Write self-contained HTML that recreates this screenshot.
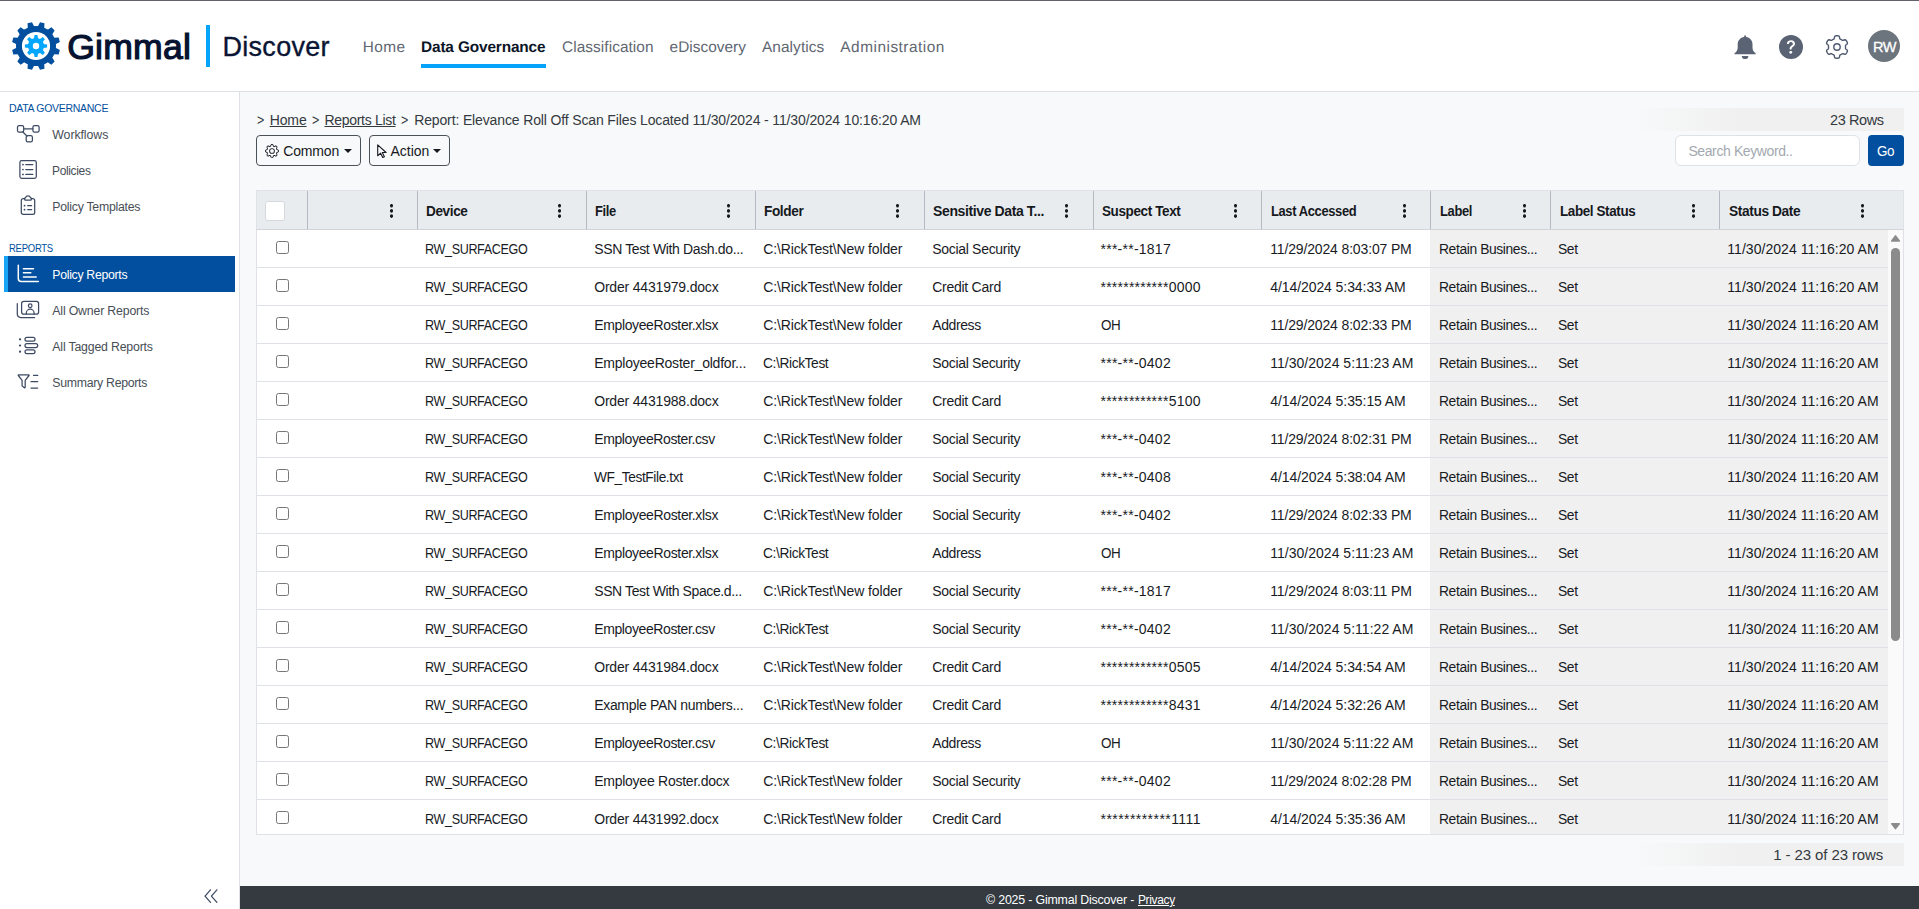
<!DOCTYPE html>
<html lang="en">
<head>
<meta charset="utf-8">
<title>Gimmal Discover - Policy Reports</title>
<style>
*{box-sizing:border-box;}
html,body{margin:0;padding:0;}
body{width:1919px;height:909px;overflow:hidden;position:relative;background:#f8f9fa;font-family:"Liberation Sans",sans-serif;color:#212529;font-size:14px;}
a{color:inherit;text-decoration:underline;}
svg{position:absolute;overflow:visible;}
.abs{position:absolute;}
.t{position:absolute;white-space:pre;line-height:1;transform-origin:0 50%;}
a.nav,a.si{text-decoration:none;}
#topline{left:0;top:0;width:1919px;height:1px;background:#665f6d;}
#header{left:0;top:1px;width:1919px;height:91px;background:#fff;border-bottom:1px solid #dee2e6;}
#logo-bar{left:206px;top:25px;width:4px;height:42px;background:#04a4fb;}
.nav{color:#5f6772;}
.nav.on{color:#0b1526;font-weight:bold;}
#nav-ul{left:421px;top:64px;width:125px;height:4px;background:#05a3fb;}
#avatar{left:1868px;top:30px;width:32px;height:32px;border-radius:50%;background:#6c757d;}
#sidebar{left:0;top:92px;width:240px;height:817px;background:#fff;border-right:1px solid #dee2e6;}
.sh{color:#014f9e;}
.si{color:#474e56;}
.si.on{color:#fff;}
#active{left:4px;top:256px;width:231px;height:36px;background:#014f9e;border-left:4px solid #18a4f5;}
.ic{fill:none;stroke:#3d4a63;stroke-width:1.25;stroke-linecap:round;stroke-linejoin:round;}
.ic.w{stroke:#fff;}
#crumb{color:#343a40;}
.btn{position:absolute;top:135px;height:31px;border:1px solid #4a5157;border-radius:4px;background:#f8f9fa;}
.caret{position:absolute;width:0;height:0;border-left:4px solid transparent;border-right:4px solid transparent;border-top:4px solid #16191d;}
#rows-top{left:1630px;top:108px;width:274px;height:23px;background:linear-gradient(90deg,rgba(240,240,240,0),#f0f0f0 40%);}
#search{left:1675px;top:135px;width:185px;height:31px;border:1px solid #dee2e6;border-radius:6px;background:#fff;}
#go{left:1868px;top:135px;width:36px;height:31px;border-radius:4px;background:#014f9e;}
#grid{left:256px;top:190px;width:1648px;height:645px;background:#fff;border:1px solid #dee2e6;}
#ghead{left:256px;top:190px;width:1648px;height:40px;background:#e9ecef;border:1px solid #dee2e6;border-bottom:1px solid #ced4da;}
.sep{position:absolute;top:191px;width:1px;height:38px;background:#b4bac1;}
.hb{font-weight:bold;color:#16191d;}
.kb{position:absolute;top:203.8px;width:3.4px;height:14px;background:radial-gradient(circle at 1.7px 1.7px,#16191d 1.5px,rgba(22,25,29,0) 1.9px) 0 0/3.4px 5.2px repeat-y;}
#hcheck{left:265px;top:201px;width:20px;height:20px;border:1px solid #d5d9de;border-radius:3px;background:#fff;}
#shade{left:1430px;top:230px;width:458px;height:604px;background:#f0f0f0;}
.rl{position:absolute;left:257px;width:1631px;height:1px;background:#dee2e6;}
.cb{position:absolute;left:276px;width:13px;height:13px;border:1px solid #767676;border-radius:2.5px;background:#fff;}
.c{color:#181b1f;}
#vthumb{left:1891px;top:247.700px;width:9px;height:393.300px;border-radius:4.500px;background:#8b8b8b;}
.arr{position:absolute;left:1891px;width:0;height:0;border-left:4.8px solid transparent;border-right:4.8px solid transparent;}
#pager{left:1630px;top:843px;width:274px;height:23px;background:linear-gradient(90deg,rgba(240,240,240,0),#f0f0f0 40%);}
#footer{left:240px;top:886px;width:1679px;height:23px;background:#343a40;}
</style>
</head>
<body>
<div id="topline" class="abs"></div>
<header>
<div id="header" class="abs"></div>
<svg class="abs" style="left:0;top:0" width="72" height="92" viewBox="0 0 72 92"><path d="M37.81 26.48 L40.01 22.14 L44.46 23.33 L44.19 28.19 L47.33 30.01 L51.41 27.34 L54.66 30.59 L51.99 34.67 L53.81 37.81 L58.67 37.54 L59.86 41.99 L55.52 44.19 L55.52 47.81 L59.86 50.01 L58.67 54.46 L53.81 54.19 L51.99 57.33 L54.66 61.41 L51.41 64.66 L47.33 61.99 L44.19 63.81 L44.46 68.67 L40.01 69.86 L37.81 65.52 L34.19 65.52 L31.99 69.86 L27.54 68.67 L27.81 63.81 L24.67 61.99 L20.59 64.66 L17.34 61.41 L20.01 57.33 L18.19 54.19 L13.33 54.46 L12.14 50.01 L16.48 47.81 L16.48 44.19 L12.14 41.99 L13.33 37.54 L18.19 37.81 L20.01 34.67 L17.34 30.59 L20.59 27.34 L24.67 30.01 L27.81 28.19 L27.54 23.33 L31.99 22.14 L34.19 26.48Z" fill="#014f9e"/><circle cx="36" cy="46" r="20" fill="#014f9e"/><circle cx="36" cy="46" r="14.1" fill="#fff"/><path d="M33.90 38.70 L34.55 34.89 L37.45 34.89 L38.10 38.70 L39.68 39.35 L42.83 37.12 L44.88 39.17 L42.65 42.32 L43.30 43.90 L47.11 44.55 L47.11 47.45 L43.30 48.10 L42.65 49.68 L44.88 52.83 L42.83 54.88 L39.68 52.65 L38.10 53.30 L37.45 57.11 L34.55 57.11 L33.90 53.30 L32.32 52.65 L29.17 54.88 L27.12 52.83 L29.35 49.68 L28.70 48.10 L24.89 47.45 L24.89 44.55 L28.70 43.90 L29.35 42.32 L27.12 39.17 L29.17 37.12 L32.32 39.35Z" fill="#05a6fd"/><circle cx="36" cy="46" r="8" fill="#05a6fd"/><circle cx="36" cy="46" r="3.2" fill="#fff"/></svg>
<span class="t" style="left:67.2px;top:29.5px;font-size:35.6px;letter-spacing:0.211px;color:#051230;-webkit-text-stroke:1.2px #051230;">Gimmal</span>
<div id="logo-bar" class="abs"></div>
<span class="t" style="left:222.4px;top:33.8px;font-size:27px;letter-spacing:0.310px;color:#0a1433;-webkit-text-stroke:0.35px #0a1433;">Discover</span>
<a class="t nav" style="left:362.7px;top:40.2px;font-size:15.4px;letter-spacing:0.413px;text-rendering:geometricPrecision;">Home</a>
<a class="t nav on bold" style="left:421.0px;top:40.2px;font-size:15.4px;letter-spacing:-0.144px;text-rendering:geometricPrecision;">Data Governance</a>
<a class="t nav" style="left:562.1px;top:40.2px;font-size:15.4px;letter-spacing:0.056px;text-rendering:geometricPrecision;">Classification</a>
<a class="t nav" style="left:669.6px;top:40.2px;font-size:15.4px;letter-spacing:0.019px;text-rendering:geometricPrecision;">eDiscovery</a>
<a class="t nav" style="left:761.9px;top:40.2px;font-size:15.4px;letter-spacing:0.101px;text-rendering:geometricPrecision;">Analytics</a>
<a class="t nav" style="left:840.3px;top:40.2px;font-size:15.4px;letter-spacing:0.506px;text-rendering:geometricPrecision;">Administration</a>
<div id="nav-ul" class="abs"></div>
<svg style="left:0;top:0" width="1919" height="92" viewBox="0 0 1919 92" fill="#5a6374"><path d="M1744.1 37C1744.1 34.600 1746.100 34.600 1746.100 37C1749.900 37.600 1752.500 40.400 1752.500 44.200L1752.500 47.500C1752.500 50.400 1753.900 52 1755.700 53.200L1755.700 54.200L1734.500 54.200L1734.500 53.200C1736.300 52 1737.700 50.400 1737.700 47.500L1737.700 44.200C1737.700 40.400 1740.300 37.600 1744.100 37Z"/><path d="M1741.800 56H1748.400A3.300 3.100 0 0 1 1741.800 56Z"/></svg>
<svg style="left:1779px;top:34.8px" width="24" height="24" viewBox="0 0 16 16" fill="#5a6374"><path d="M16 8A8 8 0 1 1 0 8a8 8 0 0 1 16 0M5.496 6.033h.825c.138 0 .248-.113.266-.25.09-.656.54-1.134 1.342-1.134.686 0 1.314.343 1.314 1.168 0 .635-.374.927-.965 1.371-.673.489-1.206 1.06-1.168 1.987l.003.217a.25.25 0 0 0 .25.246h.811a.25.25 0 0 0 .25-.25v-.105c0-.718.273-.927 1.01-1.486.609-.463 1.244-.977 1.244-2.056 0-1.511-1.276-2.241-2.673-2.241-1.267 0-2.655.59-2.75 2.286a.237.237 0 0 0 .241.247m2.325 6.443c.61 0 1.029-.394 1.029-.927 0-.552-.42-.94-1.029-.94-.584 0-1.009.388-1.009.94 0 .533.425.927 1.01.927z"/></svg>
<svg style="left:0;top:0" width="1919" height="92" viewBox="0 0 1919 92" fill="none" stroke="#4f5a70" stroke-width="1.4" stroke-linejoin="round"><path d="M1837.00 35.75 L1837.49 35.76 L1837.98 35.80 L1838.46 35.88 L1838.93 36.04 L1839.33 36.48 L1839.56 37.46 L1839.70 38.44 L1839.95 38.90 L1840.27 39.12 L1840.60 39.29 L1840.93 39.46 L1841.25 39.64 L1841.57 39.83 L1841.88 40.03 L1842.19 40.23 L1842.54 40.39 L1843.06 40.38 L1843.98 40.02 L1844.94 39.72 L1845.52 39.85 L1845.90 40.17 L1846.21 40.55 L1846.49 40.96 L1846.74 41.38 L1846.98 41.81 L1847.19 42.25 L1847.36 42.71 L1847.45 43.19 L1847.28 43.76 L1846.54 44.44 L1845.76 45.06 L1845.49 45.50 L1845.46 45.89 L1845.48 46.26 L1845.49 46.63 L1845.50 47.00 L1845.49 47.37 L1845.48 47.74 L1845.46 48.11 L1845.49 48.50 L1845.76 48.94 L1846.54 49.56 L1847.28 50.24 L1847.45 50.81 L1847.36 51.29 L1847.19 51.75 L1846.98 52.19 L1846.74 52.62 L1846.49 53.04 L1846.21 53.45 L1845.90 53.83 L1845.52 54.15 L1844.94 54.28 L1843.98 53.98 L1843.06 53.62 L1842.54 53.61 L1842.19 53.77 L1841.88 53.97 L1841.57 54.17 L1841.25 54.36 L1840.93 54.54 L1840.60 54.71 L1840.27 54.88 L1839.95 55.10 L1839.70 55.56 L1839.56 56.54 L1839.33 57.52 L1838.93 57.96 L1838.46 58.12 L1837.98 58.20 L1837.49 58.24 L1837.00 58.25 L1836.51 58.24 L1836.02 58.20 L1835.54 58.12 L1835.07 57.96 L1834.67 57.52 L1834.44 56.54 L1834.30 55.56 L1834.05 55.10 L1833.73 54.88 L1833.40 54.71 L1833.07 54.54 L1832.75 54.36 L1832.43 54.17 L1832.12 53.97 L1831.81 53.77 L1831.46 53.61 L1830.94 53.62 L1830.02 53.98 L1829.06 54.28 L1828.48 54.15 L1828.10 53.83 L1827.79 53.45 L1827.51 53.04 L1827.26 52.63 L1827.02 52.19 L1826.81 51.75 L1826.64 51.29 L1826.55 50.81 L1826.72 50.24 L1827.46 49.56 L1828.24 48.94 L1828.51 48.50 L1828.54 48.11 L1828.52 47.74 L1828.51 47.37 L1828.50 47.00 L1828.51 46.63 L1828.52 46.26 L1828.54 45.89 L1828.51 45.50 L1828.24 45.06 L1827.46 44.44 L1826.72 43.76 L1826.55 43.19 L1826.64 42.71 L1826.81 42.25 L1827.02 41.81 L1827.26 41.38 L1827.51 40.96 L1827.79 40.55 L1828.10 40.17 L1828.48 39.85 L1829.06 39.72 L1830.02 40.02 L1830.94 40.38 L1831.46 40.39 L1831.81 40.23 L1832.12 40.03 L1832.43 39.83 L1832.75 39.64 L1833.07 39.46 L1833.40 39.29 L1833.73 39.12 L1834.05 38.90 L1834.30 38.44 L1834.44 37.46 L1834.67 36.48 L1835.07 36.04 L1835.54 35.88 L1836.02 35.80 L1836.51 35.76Z"/><circle cx="1837" cy="47" r="3.2"/></svg>
<div id="avatar" class="abs"></div>
<span class="t" style="left:1872.8px;top:39.1px;font-size:15.2px;letter-spacing:-0.426px;transform:scaleX(0.9591);color:#fff;-webkit-text-stroke:0.3px #fff;">RW</span>
</header>
<nav>
<div id="sidebar" class="abs"></div>
<span class="t sh" style="left:8.6px;top:102.7px;font-size:11.2px;letter-spacing:-0.314px;transform:scaleX(0.9391);">DATA GOVERNANCE</span>
<span class="t sh" style="left:8.6px;top:242.5px;font-size:11.2px;letter-spacing:-0.314px;transform:scaleX(0.8499);">REPORTS</span>
<div id="active" class="abs"></div>
<a class="t si" style="left:52.3px;top:129.0px;font-size:12.3px;letter-spacing:-0.061px;">Workflows</a>
<a class="t si" style="left:52.3px;top:165.0px;font-size:12.3px;letter-spacing:-0.344px;transform:scaleX(0.9734);">Policies</a>
<a class="t si" style="left:52.3px;top:201.0px;font-size:12.3px;letter-spacing:-0.263px;">Policy Templates</a>
<a class="t si on" style="left:52.3px;top:269.0px;font-size:12.3px;letter-spacing:-0.306px;">Policy Reports</a>
<a class="t si" style="left:52.3px;top:305.0px;font-size:12.3px;letter-spacing:-0.168px;">All Owner Reports</a>
<a class="t si" style="left:52.3px;top:341.0px;font-size:12.3px;letter-spacing:-0.176px;">All Tagged Reports</a>
<a class="t si" style="left:52.3px;top:377.0px;font-size:12.3px;letter-spacing:-0.285px;">Summary Reports</a>
<svg class="ic" style="left:0;top:0" width="240" height="909" viewBox="0 0 240 909">
<rect x="17.5" y="125.6" width="6.2" height="6.4" rx="1.6"/><rect x="32.9" y="125.6" width="6.2" height="6.4" rx="1.6"/><rect x="26.2" y="135.6" width="6.2" height="6.2" rx="1.6"/><path d="M23.7 128.8H32.9M22.6 131.8L27 136"/>
<rect x="19.9" y="160.7" width="16.4" height="17.6" rx="1.8"/><path d="M25.8 164.6H32.8M25.8 169.5H32.8M25.8 174.4H32.8"/><path d="M22.9 164.6h.1M22.9 169.5h.1M22.9 174.4h.1" stroke-width="1.7"/>
<path d="M24.6 198.6H23.2a1.9 1.9 0 0 0-1.9 1.9V212.4a1.9 1.9 0 0 0 1.9 1.9H32.8a1.9 1.9 0 0 0 1.9-1.9V200.5a1.9 1.9 0 0 0-1.9-1.9H31.4"/><path d="M24.6 198.9a1.2 1.2 0 0 1 1-1.2c.5-2.6 4.3-2.6 4.800 0a1.200 1.200 0 0 1 1 1.200v.3a1 1 0 0 1-1 1H25.600a1 1 0 0 1-1-1z"/><path d="M27.700 205.700H31.600M27.700 209.700H31.600"/><path d="M24.500 205.700h.1M24.500 209.700h.1" stroke-width="1.700"/>
</svg>
<svg class="ic w" stroke-width="1.5" style="left:0;top:0;stroke-width:1.5" width="240" height="909" viewBox="0 0 240 909">
<path d="M18.3 265.300V278.600a3 3 0 0 0 3 3H38.300"/><path d="M23.400 268.700H33.500M23.400 272.800H30.800M23.400 276.900H36.200"/>
</svg>
<svg class="ic" style="left:0;top:0" width="240" height="909" viewBox="0 0 240 909">
<rect x="21.600" y="301.400" width="17" height="12.800" rx="2.200"/><circle cx="30.200" cy="305.700" r="1.800"/><path d="M26.300 313.900v-.8a3.900 3.900 0 0 1 7.800 0v.8"/><path d="M17.300 303.700V314.200a3.300 3.300 0 0 0 3.300 3.300H34.600"/>
<rect x="25" y="337.400" width="10" height="3.800" rx="1.900"/><rect x="25" y="343.600" width="12.700" height="3.900" rx="1.950"/><rect x="25" y="349.800" width="10" height="3.800" rx="1.900"/><path d="M20 339.300h.1M20 345.500h.1M20 351.700h.1" stroke-width="2.200"/>
<path d="M18.600 374.800H28.700a.4.4 0 0 1 .3.700L25.200 380.400V387.300a.5.5 0 0 1-.8.400L22.500 386.200a1 1 0 0 1-.4-.8V380.400L18.300 375.500a.4.4 0 0 1 .3-.7z"/><path d="M33.600 375.400H37.700M31 381.700H37.700M31 388H37.700"/>
<path d="M210.500 889.800L205 896.100L210.500 902.400M216.900 889.800L211.400 896.100L216.900 902.400"/>
</svg>
</nav>
<main>
<span class="t" style="left:257.0px;top:112.8px;font-size:14px;letter-spacing:-0.392px;transform:scaleX(0.8916);color:#343a40;">&gt;</span>
<a class="t" style="left:269.7px;top:112.8px;font-size:14px;letter-spacing:-0.120px;color:#343a40;">Home</a>
<span class="t" style="left:312.0px;top:112.8px;font-size:14px;letter-spacing:-0.392px;transform:scaleX(0.8916);color:#343a40;">&gt;</span>
<a class="t" style="left:324.5px;top:112.8px;font-size:14px;letter-spacing:-0.309px;color:#343a40;">Reports List</a>
<span class="t" style="left:401.2px;top:112.8px;font-size:14px;letter-spacing:-0.392px;transform:scaleX(0.8916);color:#343a40;">&gt;</span>
<span class="t" style="left:414.2px;top:112.8px;font-size:14px;letter-spacing:-0.136px;color:#343a40;">Report: Elevance Roll Off Scan Files Located 11/30/2024 - 11/30/2024 10:16:20 AM</span>
<div class="btn" style="left:256px;width:105px"></div><div class="btn" style="left:369px;width:81px"></div>
<svg style="left:265px;top:144px" width="14" height="14" viewBox="0 0 16 16" fill="#16191d"><path d="M8 4.754a3.246 3.246 0 1 0 0 6.492 3.246 3.246 0 0 0 0-6.492M5.754 8a2.246 2.246 0 1 1 4.492 0 2.246 2.246 0 0 1-4.492 0"/><path d="M9.796 1.343c-.527-1.79-3.065-1.79-3.592 0l-.094.319a.873.873 0 0 1-1.255.52l-.292-.16c-1.64-.892-3.433.902-2.54 2.541l.159.292a.873.873 0 0 1-.52 1.255l-.319.094c-1.79.527-1.79 3.065 0 3.592l.319.094a.873.873 0 0 1 .52 1.255l-.16.292c-.892 1.64.901 3.434 2.541 2.54l.292-.159a.873.873 0 0 1 1.255.52l.094.319c.527 1.79 3.065 1.79 3.592 0l.094-.319a.873.873 0 0 1 1.255-.52l.292.16c1.64.893 3.434-.902 2.54-2.541l-.159-.292a.873.873 0 0 1 .52-1.255l.319-.094c1.79-.527 1.79-3.065 0-3.592l-.319-.094a.873.873 0 0 1-.52-1.255l.16-.292c.893-1.64-.902-3.433-2.541-2.54l-.292.159a.873.873 0 0 1-1.255-.52zm-2.633.283c.246-.835 1.428-.835 1.674 0l.094.319a1.873 1.873 0 0 0 2.693 1.115l.291-.16c.764-.415 1.6.42 1.184 1.185l-.159.292a1.873 1.873 0 0 0 1.116 2.692l.318.094c.835.246.835 1.428 0 1.674l-.319.094a1.873 1.873 0 0 0-1.115 2.693l.16.291c.415.764-.42 1.6-1.185 1.184l-.291-.159a1.873 1.873 0 0 0-2.693 1.116l-.094.318c-.246.835-1.428.835-1.674 0l-.094-.319a1.873 1.873 0 0 0-2.692-1.115l-.292.16c-.764.415-1.6-.42-1.184-1.185l.159-.291A1.873 1.873 0 0 0 1.945 8.93l-.319-.094c-.835-.246-.835-1.428 0-1.674l.319-.094A1.873 1.873 0 0 0 3.06 4.377l-.16-.292c-.415-.764.42-1.6 1.185-1.184l.292.159a1.873 1.873 0 0 0 2.692-1.115z"/></svg>
<span class="t" style="left:283.2px;top:143.5px;font-size:14px;letter-spacing:-0.139px;color:#16191d;">Common</span>
<div class="caret" style="left:344px;top:148.500px"></div>
<svg style="left:376px;top:143px" width="12" height="16" viewBox="0 0 12 16" fill="none" stroke="#16191d" stroke-width="1.100" stroke-linejoin="round"><path d="M1.700 1.900V12.800L4.600 10.200L6.700 14.500L8.400 13.700L6.300 9.500H10.100Z"/></svg>
<span class="t" style="left:390.4px;top:143.5px;font-size:14px;letter-spacing:0.016px;color:#16191d;">Action</span>
<div class="caret" style="left:433px;top:148.500px"></div>
<div id="rows-top" class="abs"></div>
<span class="t" style="left:1829.6px;top:112.3px;font-size:15px;letter-spacing:-0.420px;transform:scaleX(0.9671);color:#343a40;">23 Rows</span>
<div id="search" class="abs"></div>
<span class="t" style="left:1688.4px;top:144.4px;font-size:14px;letter-spacing:-0.392px;color:#a3a9b0;">Search Keyword..</span>
<div id="go" class="abs"></div>
<span class="t" style="left:1877.4px;top:143.7px;font-size:14px;letter-spacing:-0.392px;transform:scaleX(0.9620);color:#fff;">Go</span>
<div id="grid" class="abs"></div><div id="shade" class="abs"></div><div id="ghead" class="abs"></div><div id="hcheck" class="abs"></div>
<div class="sep" style="left:307px"></div>
<div class="sep" style="left:417px"></div>
<div class="sep" style="left:586px"></div>
<div class="sep" style="left:755px"></div>
<div class="sep" style="left:924px"></div>
<div class="sep" style="left:1093px"></div>
<div class="sep" style="left:1261px"></div>
<div class="sep" style="left:1430px"></div>
<div class="sep" style="left:1550px"></div>
<div class="sep" style="left:1719px"></div>
<span class="t hb bold" style="left:426.3px;top:204.3px;font-size:14px;letter-spacing:-0.392px;transform:scaleX(0.9700);">Device</span>
<span class="t hb bold" style="left:595.3px;top:204.3px;font-size:14px;letter-spacing:-0.392px;transform:scaleX(0.9238);">File</span>
<span class="t hb bold" style="left:764.3px;top:204.3px;font-size:14px;letter-spacing:-0.392px;transform:scaleX(0.9725);">Folder</span>
<span class="t hb bold" style="left:933.1px;top:204.3px;font-size:14px;letter-spacing:-0.392px;">Sensitive Data T...</span>
<span class="t hb bold" style="left:1101.8px;top:204.3px;font-size:14px;letter-spacing:-0.392px;transform:scaleX(0.9634);">Suspect Text</span>
<span class="t hb bold" style="left:1271.2px;top:204.3px;font-size:14px;letter-spacing:-0.392px;transform:scaleX(0.9220);">Last Accessed</span>
<span class="t hb bold" style="left:1440.1px;top:204.3px;font-size:14px;letter-spacing:-0.392px;transform:scaleX(0.9254);">Label</span>
<span class="t hb bold" style="left:1559.6px;top:204.3px;font-size:14px;letter-spacing:-0.392px;transform:scaleX(0.9590);">Label Status</span>
<span class="t hb bold" style="left:1728.8px;top:204.3px;font-size:14px;letter-spacing:-0.392px;transform:scaleX(0.9807);">Status Date</span>
<div class="kb" style="left:390.0px"></div>
<div class="kb" style="left:557.6px"></div>
<div class="kb" style="left:726.6px"></div>
<div class="kb" style="left:895.6px"></div>
<div class="kb" style="left:1064.6px"></div>
<div class="kb" style="left:1233.6px"></div>
<div class="kb" style="left:1402.6px"></div>
<div class="kb" style="left:1523.0px"></div>
<div class="kb" style="left:1691.6px"></div>
<div class="kb" style="left:1860.7px"></div>
<div class="rl" style="top:267px"></div>
<div class="cb" style="top:241px"></div>
<span class="t c" style="left:425.4px;top:242.1px;font-size:14px;letter-spacing:-0.392px;transform:scaleX(0.8973);">RW_SURFACEGO</span>
<span class="t c" style="left:594.2px;top:242.1px;font-size:14px;letter-spacing:-0.361px;">SSN Test With Dash.do...</span>
<span class="t c" style="left:763.2px;top:242.1px;font-size:14px;letter-spacing:-0.114px;">C:\RickTest\New folder</span>
<span class="t c" style="left:932.2px;top:242.1px;font-size:14px;letter-spacing:-0.300px;">Social Security</span>
<span class="t c" style="left:1100.5px;top:242.1px;font-size:14px;letter-spacing:0.248px;">***-**-1817</span>
<span class="t c" style="left:1270.2px;top:242.1px;font-size:14px;letter-spacing:-0.147px;">11/29/2024 8:03:07 PM</span>
<span class="t c" style="left:1439.2px;top:242.1px;font-size:14px;letter-spacing:-0.392px;transform:scaleX(0.9892);">Retain Busines...</span>
<span class="t c" style="left:1558.2px;top:242.1px;font-size:14px;letter-spacing:-0.392px;transform:scaleX(0.9886);">Set</span>
<span class="t c" style="left:1727.3px;top:242.1px;font-size:14px;letter-spacing:0.038px;">11/30/2024 11:16:20 AM</span>
<div class="rl" style="top:305px"></div>
<div class="cb" style="top:279px"></div>
<span class="t c" style="left:425.4px;top:280.1px;font-size:14px;letter-spacing:-0.392px;transform:scaleX(0.8973);">RW_SURFACEGO</span>
<span class="t c" style="left:594.2px;top:280.1px;font-size:14px;letter-spacing:-0.185px;">Order 4431979.docx</span>
<span class="t c" style="left:763.2px;top:280.1px;font-size:14px;letter-spacing:-0.114px;">C:\RickTest\New folder</span>
<span class="t c" style="left:932.2px;top:280.1px;font-size:14px;letter-spacing:-0.259px;">Credit Card</span>
<span class="t c" style="left:1100.5px;top:280.1px;font-size:14px;letter-spacing:0.231px;">************0000</span>
<span class="t c" style="left:1270.2px;top:280.1px;font-size:14px;letter-spacing:-0.074px;">4/14/2024 5:34:33 AM</span>
<span class="t c" style="left:1439.2px;top:280.1px;font-size:14px;letter-spacing:-0.392px;transform:scaleX(0.9892);">Retain Busines...</span>
<span class="t c" style="left:1558.2px;top:280.1px;font-size:14px;letter-spacing:-0.392px;transform:scaleX(0.9886);">Set</span>
<span class="t c" style="left:1727.3px;top:280.1px;font-size:14px;letter-spacing:0.038px;">11/30/2024 11:16:20 AM</span>
<div class="rl" style="top:343px"></div>
<div class="cb" style="top:317px"></div>
<span class="t c" style="left:425.4px;top:318.1px;font-size:14px;letter-spacing:-0.392px;transform:scaleX(0.8973);">RW_SURFACEGO</span>
<span class="t c" style="left:594.2px;top:318.1px;font-size:14px;letter-spacing:-0.362px;">EmployeeRoster.xlsx</span>
<span class="t c" style="left:763.2px;top:318.1px;font-size:14px;letter-spacing:-0.114px;">C:\RickTest\New folder</span>
<span class="t c" style="left:932.2px;top:318.1px;font-size:14px;letter-spacing:-0.392px;">Address</span>
<span class="t c" style="left:1100.5px;top:318.1px;font-size:14px;letter-spacing:-0.392px;transform:scaleX(0.9608);">OH</span>
<span class="t c" style="left:1270.2px;top:318.1px;font-size:14px;letter-spacing:-0.147px;">11/29/2024 8:02:33 PM</span>
<span class="t c" style="left:1439.2px;top:318.1px;font-size:14px;letter-spacing:-0.392px;transform:scaleX(0.9892);">Retain Busines...</span>
<span class="t c" style="left:1558.2px;top:318.1px;font-size:14px;letter-spacing:-0.392px;transform:scaleX(0.9886);">Set</span>
<span class="t c" style="left:1727.3px;top:318.1px;font-size:14px;letter-spacing:0.038px;">11/30/2024 11:16:20 AM</span>
<div class="rl" style="top:381px"></div>
<div class="cb" style="top:355px"></div>
<span class="t c" style="left:425.4px;top:356.1px;font-size:14px;letter-spacing:-0.392px;transform:scaleX(0.8973);">RW_SURFACEGO</span>
<span class="t c" style="left:594.2px;top:356.1px;font-size:14px;letter-spacing:-0.222px;">EmployeeRoster_oldfor...</span>
<span class="t c" style="left:763.2px;top:356.1px;font-size:14px;letter-spacing:-0.392px;transform:scaleX(0.9824);">C:\RickTest</span>
<span class="t c" style="left:932.2px;top:356.1px;font-size:14px;letter-spacing:-0.300px;">Social Security</span>
<span class="t c" style="left:1100.5px;top:356.1px;font-size:14px;letter-spacing:0.248px;">***-**-0402</span>
<span class="t c" style="left:1270.2px;top:356.1px;font-size:14px;letter-spacing:0.024px;">11/30/2024 5:11:23 AM</span>
<span class="t c" style="left:1439.2px;top:356.1px;font-size:14px;letter-spacing:-0.392px;transform:scaleX(0.9892);">Retain Busines...</span>
<span class="t c" style="left:1558.2px;top:356.1px;font-size:14px;letter-spacing:-0.392px;transform:scaleX(0.9886);">Set</span>
<span class="t c" style="left:1727.3px;top:356.1px;font-size:14px;letter-spacing:0.038px;">11/30/2024 11:16:20 AM</span>
<div class="rl" style="top:419px"></div>
<div class="cb" style="top:393px"></div>
<span class="t c" style="left:425.4px;top:394.1px;font-size:14px;letter-spacing:-0.392px;transform:scaleX(0.8973);">RW_SURFACEGO</span>
<span class="t c" style="left:594.2px;top:394.1px;font-size:14px;letter-spacing:-0.185px;">Order 4431988.docx</span>
<span class="t c" style="left:763.2px;top:394.1px;font-size:14px;letter-spacing:-0.114px;">C:\RickTest\New folder</span>
<span class="t c" style="left:932.2px;top:394.1px;font-size:14px;letter-spacing:-0.259px;">Credit Card</span>
<span class="t c" style="left:1100.5px;top:394.1px;font-size:14px;letter-spacing:0.231px;">************5100</span>
<span class="t c" style="left:1270.2px;top:394.1px;font-size:14px;letter-spacing:-0.074px;">4/14/2024 5:35:15 AM</span>
<span class="t c" style="left:1439.2px;top:394.1px;font-size:14px;letter-spacing:-0.392px;transform:scaleX(0.9892);">Retain Busines...</span>
<span class="t c" style="left:1558.2px;top:394.1px;font-size:14px;letter-spacing:-0.392px;transform:scaleX(0.9886);">Set</span>
<span class="t c" style="left:1727.3px;top:394.1px;font-size:14px;letter-spacing:0.038px;">11/30/2024 11:16:20 AM</span>
<div class="rl" style="top:457px"></div>
<div class="cb" style="top:431px"></div>
<span class="t c" style="left:425.4px;top:432.1px;font-size:14px;letter-spacing:-0.392px;transform:scaleX(0.8973);">RW_SURFACEGO</span>
<span class="t c" style="left:594.2px;top:432.1px;font-size:14px;letter-spacing:-0.392px;">EmployeeRoster.csv</span>
<span class="t c" style="left:763.2px;top:432.1px;font-size:14px;letter-spacing:-0.114px;">C:\RickTest\New folder</span>
<span class="t c" style="left:932.2px;top:432.1px;font-size:14px;letter-spacing:-0.300px;">Social Security</span>
<span class="t c" style="left:1100.5px;top:432.1px;font-size:14px;letter-spacing:0.248px;">***-**-0402</span>
<span class="t c" style="left:1270.2px;top:432.1px;font-size:14px;letter-spacing:-0.147px;">11/29/2024 8:02:31 PM</span>
<span class="t c" style="left:1439.2px;top:432.1px;font-size:14px;letter-spacing:-0.392px;transform:scaleX(0.9892);">Retain Busines...</span>
<span class="t c" style="left:1558.2px;top:432.1px;font-size:14px;letter-spacing:-0.392px;transform:scaleX(0.9886);">Set</span>
<span class="t c" style="left:1727.3px;top:432.1px;font-size:14px;letter-spacing:0.038px;">11/30/2024 11:16:20 AM</span>
<div class="rl" style="top:495px"></div>
<div class="cb" style="top:469px"></div>
<span class="t c" style="left:425.4px;top:470.1px;font-size:14px;letter-spacing:-0.392px;transform:scaleX(0.8973);">RW_SURFACEGO</span>
<span class="t c" style="left:594.2px;top:470.1px;font-size:14px;letter-spacing:-0.392px;transform:scaleX(0.9782);">WF_TestFile.txt</span>
<span class="t c" style="left:763.2px;top:470.1px;font-size:14px;letter-spacing:-0.114px;">C:\RickTest\New folder</span>
<span class="t c" style="left:932.2px;top:470.1px;font-size:14px;letter-spacing:-0.300px;">Social Security</span>
<span class="t c" style="left:1100.5px;top:470.1px;font-size:14px;letter-spacing:0.248px;">***-**-0408</span>
<span class="t c" style="left:1270.2px;top:470.1px;font-size:14px;letter-spacing:-0.074px;">4/14/2024 5:38:04 AM</span>
<span class="t c" style="left:1439.2px;top:470.1px;font-size:14px;letter-spacing:-0.392px;transform:scaleX(0.9892);">Retain Busines...</span>
<span class="t c" style="left:1558.2px;top:470.1px;font-size:14px;letter-spacing:-0.392px;transform:scaleX(0.9886);">Set</span>
<span class="t c" style="left:1727.3px;top:470.1px;font-size:14px;letter-spacing:0.038px;">11/30/2024 11:16:20 AM</span>
<div class="rl" style="top:533px"></div>
<div class="cb" style="top:507px"></div>
<span class="t c" style="left:425.4px;top:508.1px;font-size:14px;letter-spacing:-0.392px;transform:scaleX(0.8973);">RW_SURFACEGO</span>
<span class="t c" style="left:594.2px;top:508.1px;font-size:14px;letter-spacing:-0.362px;">EmployeeRoster.xlsx</span>
<span class="t c" style="left:763.2px;top:508.1px;font-size:14px;letter-spacing:-0.114px;">C:\RickTest\New folder</span>
<span class="t c" style="left:932.2px;top:508.1px;font-size:14px;letter-spacing:-0.300px;">Social Security</span>
<span class="t c" style="left:1100.5px;top:508.1px;font-size:14px;letter-spacing:0.248px;">***-**-0402</span>
<span class="t c" style="left:1270.2px;top:508.1px;font-size:14px;letter-spacing:-0.147px;">11/29/2024 8:02:33 PM</span>
<span class="t c" style="left:1439.2px;top:508.1px;font-size:14px;letter-spacing:-0.392px;transform:scaleX(0.9892);">Retain Busines...</span>
<span class="t c" style="left:1558.2px;top:508.1px;font-size:14px;letter-spacing:-0.392px;transform:scaleX(0.9886);">Set</span>
<span class="t c" style="left:1727.3px;top:508.1px;font-size:14px;letter-spacing:0.038px;">11/30/2024 11:16:20 AM</span>
<div class="rl" style="top:571px"></div>
<div class="cb" style="top:545px"></div>
<span class="t c" style="left:425.4px;top:546.1px;font-size:14px;letter-spacing:-0.392px;transform:scaleX(0.8973);">RW_SURFACEGO</span>
<span class="t c" style="left:594.2px;top:546.1px;font-size:14px;letter-spacing:-0.362px;">EmployeeRoster.xlsx</span>
<span class="t c" style="left:763.2px;top:546.1px;font-size:14px;letter-spacing:-0.392px;transform:scaleX(0.9824);">C:\RickTest</span>
<span class="t c" style="left:932.2px;top:546.1px;font-size:14px;letter-spacing:-0.392px;">Address</span>
<span class="t c" style="left:1100.5px;top:546.1px;font-size:14px;letter-spacing:-0.392px;transform:scaleX(0.9608);">OH</span>
<span class="t c" style="left:1270.2px;top:546.1px;font-size:14px;letter-spacing:0.024px;">11/30/2024 5:11:23 AM</span>
<span class="t c" style="left:1439.2px;top:546.1px;font-size:14px;letter-spacing:-0.392px;transform:scaleX(0.9892);">Retain Busines...</span>
<span class="t c" style="left:1558.2px;top:546.1px;font-size:14px;letter-spacing:-0.392px;transform:scaleX(0.9886);">Set</span>
<span class="t c" style="left:1727.3px;top:546.1px;font-size:14px;letter-spacing:0.038px;">11/30/2024 11:16:20 AM</span>
<div class="rl" style="top:609px"></div>
<div class="cb" style="top:583px"></div>
<span class="t c" style="left:425.4px;top:584.1px;font-size:14px;letter-spacing:-0.392px;transform:scaleX(0.8973);">RW_SURFACEGO</span>
<span class="t c" style="left:594.2px;top:584.1px;font-size:14px;letter-spacing:-0.392px;">SSN Test With Space.d...</span>
<span class="t c" style="left:763.2px;top:584.1px;font-size:14px;letter-spacing:-0.114px;">C:\RickTest\New folder</span>
<span class="t c" style="left:932.2px;top:584.1px;font-size:14px;letter-spacing:-0.300px;">Social Security</span>
<span class="t c" style="left:1100.5px;top:584.1px;font-size:14px;letter-spacing:0.248px;">***-**-1817</span>
<span class="t c" style="left:1270.2px;top:584.1px;font-size:14px;letter-spacing:-0.094px;">11/29/2024 8:03:11 PM</span>
<span class="t c" style="left:1439.2px;top:584.1px;font-size:14px;letter-spacing:-0.392px;transform:scaleX(0.9892);">Retain Busines...</span>
<span class="t c" style="left:1558.2px;top:584.1px;font-size:14px;letter-spacing:-0.392px;transform:scaleX(0.9886);">Set</span>
<span class="t c" style="left:1727.3px;top:584.1px;font-size:14px;letter-spacing:0.038px;">11/30/2024 11:16:20 AM</span>
<div class="rl" style="top:647px"></div>
<div class="cb" style="top:621px"></div>
<span class="t c" style="left:425.4px;top:622.1px;font-size:14px;letter-spacing:-0.392px;transform:scaleX(0.8973);">RW_SURFACEGO</span>
<span class="t c" style="left:594.2px;top:622.1px;font-size:14px;letter-spacing:-0.392px;">EmployeeRoster.csv</span>
<span class="t c" style="left:763.2px;top:622.1px;font-size:14px;letter-spacing:-0.392px;transform:scaleX(0.9824);">C:\RickTest</span>
<span class="t c" style="left:932.2px;top:622.1px;font-size:14px;letter-spacing:-0.300px;">Social Security</span>
<span class="t c" style="left:1100.5px;top:622.1px;font-size:14px;letter-spacing:0.248px;">***-**-0402</span>
<span class="t c" style="left:1270.2px;top:622.1px;font-size:14px;letter-spacing:0.024px;">11/30/2024 5:11:22 AM</span>
<span class="t c" style="left:1439.2px;top:622.1px;font-size:14px;letter-spacing:-0.392px;transform:scaleX(0.9892);">Retain Busines...</span>
<span class="t c" style="left:1558.2px;top:622.1px;font-size:14px;letter-spacing:-0.392px;transform:scaleX(0.9886);">Set</span>
<span class="t c" style="left:1727.3px;top:622.1px;font-size:14px;letter-spacing:0.038px;">11/30/2024 11:16:20 AM</span>
<div class="rl" style="top:685px"></div>
<div class="cb" style="top:659px"></div>
<span class="t c" style="left:425.4px;top:660.1px;font-size:14px;letter-spacing:-0.392px;transform:scaleX(0.8973);">RW_SURFACEGO</span>
<span class="t c" style="left:594.2px;top:660.1px;font-size:14px;letter-spacing:-0.185px;">Order 4431984.docx</span>
<span class="t c" style="left:763.2px;top:660.1px;font-size:14px;letter-spacing:-0.114px;">C:\RickTest\New folder</span>
<span class="t c" style="left:932.2px;top:660.1px;font-size:14px;letter-spacing:-0.259px;">Credit Card</span>
<span class="t c" style="left:1100.5px;top:660.1px;font-size:14px;letter-spacing:0.231px;">************0505</span>
<span class="t c" style="left:1270.2px;top:660.1px;font-size:14px;letter-spacing:-0.074px;">4/14/2024 5:34:54 AM</span>
<span class="t c" style="left:1439.2px;top:660.1px;font-size:14px;letter-spacing:-0.392px;transform:scaleX(0.9892);">Retain Busines...</span>
<span class="t c" style="left:1558.2px;top:660.1px;font-size:14px;letter-spacing:-0.392px;transform:scaleX(0.9886);">Set</span>
<span class="t c" style="left:1727.3px;top:660.1px;font-size:14px;letter-spacing:0.038px;">11/30/2024 11:16:20 AM</span>
<div class="rl" style="top:723px"></div>
<div class="cb" style="top:697px"></div>
<span class="t c" style="left:425.4px;top:698.1px;font-size:14px;letter-spacing:-0.392px;transform:scaleX(0.8973);">RW_SURFACEGO</span>
<span class="t c" style="left:594.2px;top:698.1px;font-size:14px;letter-spacing:-0.321px;">Example PAN numbers...</span>
<span class="t c" style="left:763.2px;top:698.1px;font-size:14px;letter-spacing:-0.114px;">C:\RickTest\New folder</span>
<span class="t c" style="left:932.2px;top:698.1px;font-size:14px;letter-spacing:-0.259px;">Credit Card</span>
<span class="t c" style="left:1100.5px;top:698.1px;font-size:14px;letter-spacing:0.231px;">************8431</span>
<span class="t c" style="left:1270.2px;top:698.1px;font-size:14px;letter-spacing:-0.074px;">4/14/2024 5:32:26 AM</span>
<span class="t c" style="left:1439.2px;top:698.1px;font-size:14px;letter-spacing:-0.392px;transform:scaleX(0.9892);">Retain Busines...</span>
<span class="t c" style="left:1558.2px;top:698.1px;font-size:14px;letter-spacing:-0.392px;transform:scaleX(0.9886);">Set</span>
<span class="t c" style="left:1727.3px;top:698.1px;font-size:14px;letter-spacing:0.038px;">11/30/2024 11:16:20 AM</span>
<div class="rl" style="top:761px"></div>
<div class="cb" style="top:735px"></div>
<span class="t c" style="left:425.4px;top:736.1px;font-size:14px;letter-spacing:-0.392px;transform:scaleX(0.8973);">RW_SURFACEGO</span>
<span class="t c" style="left:594.2px;top:736.1px;font-size:14px;letter-spacing:-0.392px;">EmployeeRoster.csv</span>
<span class="t c" style="left:763.2px;top:736.1px;font-size:14px;letter-spacing:-0.392px;transform:scaleX(0.9824);">C:\RickTest</span>
<span class="t c" style="left:932.2px;top:736.1px;font-size:14px;letter-spacing:-0.392px;">Address</span>
<span class="t c" style="left:1100.5px;top:736.1px;font-size:14px;letter-spacing:-0.392px;transform:scaleX(0.9608);">OH</span>
<span class="t c" style="left:1270.2px;top:736.1px;font-size:14px;letter-spacing:0.024px;">11/30/2024 5:11:22 AM</span>
<span class="t c" style="left:1439.2px;top:736.1px;font-size:14px;letter-spacing:-0.392px;transform:scaleX(0.9892);">Retain Busines...</span>
<span class="t c" style="left:1558.2px;top:736.1px;font-size:14px;letter-spacing:-0.392px;transform:scaleX(0.9886);">Set</span>
<span class="t c" style="left:1727.3px;top:736.1px;font-size:14px;letter-spacing:0.038px;">11/30/2024 11:16:20 AM</span>
<div class="rl" style="top:799px"></div>
<div class="cb" style="top:773px"></div>
<span class="t c" style="left:425.4px;top:774.1px;font-size:14px;letter-spacing:-0.392px;transform:scaleX(0.8973);">RW_SURFACEGO</span>
<span class="t c" style="left:594.2px;top:774.1px;font-size:14px;letter-spacing:-0.251px;">Employee Roster.docx</span>
<span class="t c" style="left:763.2px;top:774.1px;font-size:14px;letter-spacing:-0.114px;">C:\RickTest\New folder</span>
<span class="t c" style="left:932.2px;top:774.1px;font-size:14px;letter-spacing:-0.300px;">Social Security</span>
<span class="t c" style="left:1100.5px;top:774.1px;font-size:14px;letter-spacing:0.248px;">***-**-0402</span>
<span class="t c" style="left:1270.2px;top:774.1px;font-size:14px;letter-spacing:-0.147px;">11/29/2024 8:02:28 PM</span>
<span class="t c" style="left:1439.2px;top:774.1px;font-size:14px;letter-spacing:-0.392px;transform:scaleX(0.9892);">Retain Busines...</span>
<span class="t c" style="left:1558.2px;top:774.1px;font-size:14px;letter-spacing:-0.392px;transform:scaleX(0.9886);">Set</span>
<span class="t c" style="left:1727.3px;top:774.1px;font-size:14px;letter-spacing:0.038px;">11/30/2024 11:16:20 AM</span>
<div class="cb" style="top:811px"></div>
<span class="t c" style="left:425.4px;top:812.1px;font-size:14px;letter-spacing:-0.392px;transform:scaleX(0.8973);">RW_SURFACEGO</span>
<span class="t c" style="left:594.2px;top:812.1px;font-size:14px;letter-spacing:-0.185px;">Order 4431992.docx</span>
<span class="t c" style="left:763.2px;top:812.1px;font-size:14px;letter-spacing:-0.114px;">C:\RickTest\New folder</span>
<span class="t c" style="left:932.2px;top:812.1px;font-size:14px;letter-spacing:-0.259px;">Credit Card</span>
<span class="t c" style="left:1100.5px;top:812.1px;font-size:14px;letter-spacing:0.440px;">************1111</span>
<span class="t c" style="left:1270.2px;top:812.1px;font-size:14px;letter-spacing:-0.074px;">4/14/2024 5:35:36 AM</span>
<span class="t c" style="left:1439.2px;top:812.1px;font-size:14px;letter-spacing:-0.392px;transform:scaleX(0.9892);">Retain Busines...</span>
<span class="t c" style="left:1558.2px;top:812.1px;font-size:14px;letter-spacing:-0.392px;transform:scaleX(0.9886);">Set</span>
<span class="t c" style="left:1727.3px;top:812.1px;font-size:14px;letter-spacing:0.038px;">11/30/2024 11:16:20 AM</span>
<div class="abs" style="left:1888px;top:230px;width:15px;height:604px;background:#fafafa"></div>
<div id="vthumb" class="abs"></div>
<svg style="left:0;top:0" width="1919" height="909" viewBox="0 0 1919 909" stroke-width="1.6" stroke-linejoin="round"><path d="M1895.5 235.9L1899.3 240.9H1891.7Z" fill="#8b8b8b" stroke="#8b8b8b"/><path d="M1895.5 828.6L1899.2 823.8H1891.8Z" fill="#8b8b8b" stroke="#8b8b8b"/></svg>
<div id="pager" class="abs"></div>
<span class="t" style="left:1773.3px;top:847.3px;font-size:15px;letter-spacing:-0.108px;color:#343a40;">1 - 23 of 23 rows</span>
</main>
<footer>
<div id="footer" class="abs"></div>
<span class="t" style="left:986.0px;top:893.8px;font-size:12.4px;letter-spacing:-0.188px;color:#fff;">© 2025 - Gimmal Discover - </span>
<a class="t" style="left:1137.6px;top:893.8px;font-size:12.4px;letter-spacing:-0.347px;transform:scaleX(0.9626);color:#fff;">Privacy</a>
</footer>
</body>
</html>
